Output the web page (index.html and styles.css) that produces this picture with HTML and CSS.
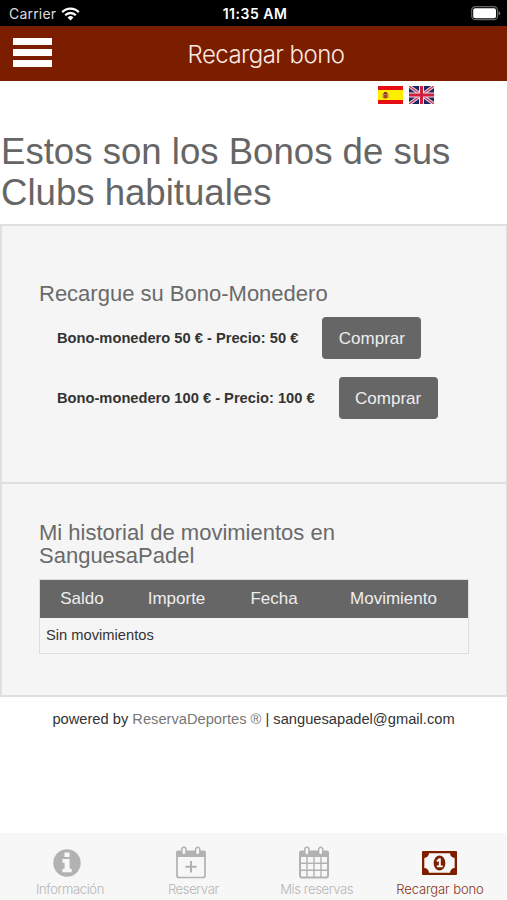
FILE: index.html
```html
<!DOCTYPE html>
<html lang="es">
<head>
<meta charset="utf-8">
<title>Recargar bono</title>
<link rel="stylesheet" href="styles.css">
</head>
<body>
<div class="status">
  <div class="carrier"><span>Carrier</span>
    <svg width="19" height="14" viewBox="0 0 19 14" fill="none" stroke="#fff" stroke-width="2.3"><path d="M1.2 5.1a11.7 11.7 0 0 1 16.6 0M4.2 8.2a7.5 7.5 0 0 1 10.6 0"/><path d="M6.6 10.4a4.1 4.1 0 0 1 5.8 0L9.5 13.5z" fill="#fff" stroke="none"/></svg>
  </div>
  <div class="time">11:35 AM</div>
  <svg class="battery" width="30" height="15" viewBox="0 0 30 15"><rect x=".7" y=".7" width="25.8" height="13" rx="3.6" fill="none" stroke="#666" stroke-width="1.2"/><rect x="2.2" y="2.2" width="22.8" height="10" rx="2" fill="#fff"/><path d="M27.6 5v4.6q1.7-.8 1.7-2.3T27.6 5z" fill="#777"/></svg>
</div>
<header class="bar">
  <div class="menu"><i></i><i></i><i></i></div>
  <div class="title">Recargar bono</div>
</header>
<main>
  <div class="flags">
    <svg width="25" height="18" viewBox="0 0 25 18"><path fill="#e60d13" d="M0 0h25v18H0z"/><path fill="#ffed00" d="M0 4h25v10H0z"/><path fill="#c66b3b" d="M5 7h5v5H5z"/><path fill="#8e3d2c" d="M6 6h3v2H6zM6.500 9h2v3.500h-2z"/><path fill="#b99b62" d="M4.500 8h1v4h-1zM9.500 8h1v4h-1z"/></svg>
    <svg width="25" height="18" viewBox="0 0 25 18"><path fill="#1c2663" d="M0 0h25v18H0z"/><path stroke="#e9d9e4" stroke-width="3.400" d="M0 0l25 18M25 0L0 18"/><path stroke="#cf3452" stroke-width="1.300" d="M0 0l25 18M25 0L0 18"/><path stroke="#f1dfe8" stroke-width="5" d="M12.500 0v18M0 9h25"/><path stroke="#d01f3d" stroke-width="3" d="M12.500 0v18M0 9h25"/></svg>
  </div>
  <h1>Estos son los Bonos de sus Clubs habituales</h1>
  <section class="panel buy">
    <h2>Recargue su Bono-Monedero</h2>
    <div class="offer"><b>Bono-monedero 50 € - Precio: 50 €</b><button>Comprar</button></div>
    <div class="offer"><b>Bono-monedero 100 € - Precio: 100 €</b><button>Comprar</button></div>
  </section>
  <section class="panel history">
    <h2>Mi historial de movimientos en SanguesaPadel</h2>
    <div class="table">
      <div class="thead"><span>Saldo</span><span>Importe</span><span>Fecha</span><span>Movimiento</span></div>
      <div class="empty">Sin movimientos</div>
    </div>
  </section>
  <footer>powered by <a>ReservaDeportes ®</a> | sanguesapadel@gmail.com</footer>
</main>
<nav>
  <div class="tab info">
    <svg width="28" height="28" viewBox="0 0 28 28"><circle cx="14" cy="14" r="13.700" fill="#b2b2b2"/><path fill="#f7f7f7" d="M11.500 3.600h5v4.300h-5zM9.400 10h7.200v9.700h2.100v3.600H9.400v-3.600h2.200v-6H9.400z"/></svg>
    <span>Información</span>
  </div>
  <div class="tab book">
    <svg width="30" height="33" viewBox="0 0 30 33" fill="none" stroke="#b2b2b2"><path fill="#b2b2b2" stroke="none" d="M2 4.500h26a2 2 0 0 1 2 2V11H0V6.500a2 2 0 0 1 2-2z"/><path stroke-width="1.700" d="M1 7v22.500Q1 31.500 3 31.500h24q2 0 2-2V7"/><path fill="#f7f7f7" stroke-width="1.500" d="M5.800 3.400a2.100 2.100 0 0 1 4.200 0v3.400a2.100 2.100 0 0 1-4.200 0zM19.600 3.400a2.100 2.100 0 0 1 4.200 0v3.400a2.100 2.100 0 0 1-4.200 0z"/><path stroke-width="2.100" d="M15 15v11.500M9.300 20.700h11.400"/></svg>
    <span>Reservar</span>
  </div>
  <div class="tab mine">
    <svg width="30" height="33" viewBox="0 0 30 33" fill="none" stroke="#b2b2b2"><path fill="#b2b2b2" stroke="none" d="M2 4.500h26a2 2 0 0 1 2 2V11H0V6.500a2 2 0 0 1 2-2z"/><path stroke-width="2" d="M1 7v22.500Q1 31.500 3 31.500h24q2 0 2-2V7"/><path fill="#f7f7f7" stroke-width="1.500" d="M5.800 3.400a2.100 2.100 0 0 1 4.200 0v3.400a2.100 2.100 0 0 1-4.200 0zM19.600 3.400a2.100 2.100 0 0 1 4.200 0v3.400a2.100 2.100 0 0 1-4.200 0z"/><path stroke-width="1.400" d="M8 11v20M15 11v20M22 11v20M1 17.300h28M1 24.300h28"/></svg>
    <span>Mis reservas</span>
  </div>
  <div class="tab active">
    <svg width="35" height="24" viewBox="0 0 35 24"><rect width="35" height="24" rx="1" fill="#7d1e00"/><path fill="#f7f7f7" d="M7 2.300h21a4.700 4.700 0 0 0 4.700 4.700v10a4.700 4.700 0 0 0-4.700 4.700H7A4.700 4.700 0 0 0 2.300 17V7A4.700 4.700 0 0 0 7 2.300z"/><ellipse cx="17.500" cy="12" rx="5.900" ry="7.600" fill="#7d1e00"/><path fill="#f7f7f7" d="M16.800 7.300h2v7.300h2v1.700h-6v-1.700h2V10l-1.500 1-1-1.300z"/></svg>
    <span>Recargar bono</span>
  </div>
</nav>
</body>
</html>
```
FILE: styles.css
```css
* { box-sizing: border-box; }
body {
  margin: 0;
  height: 900px;
  display: flex;
  flex-direction: column;
  background: #fff;
  color: #333;
  font-family: "Liberation Sans", Arial, sans-serif;
  overflow: hidden;
}
svg { display: block; flex: none; }
.status {
  height: 26px;
  flex: none;
  background: #000;
  color: #fff;
  display: grid;
  grid-template-columns: 1fr auto 1fr;
  align-items: center;
  padding: 1px 6px 0 9px;
  font: 14px/20px Inter, sans-serif;
}
.carrier { display: flex; align-items: center; gap: 5px; color: #ddd; letter-spacing: .2px; }
.time { font-weight: 600; letter-spacing: .5px; }
.battery { justify-self: end; }
.bar {
  height: 55px;
  flex: none;
  background: #7b1e00;
  display: grid;
  grid-template-columns: 52px 1fr 27px;
  align-items: center;
}
.menu { display: flex; flex-direction: column; gap: 4px; padding: 0 0 3px 13px; }
.menu i { height: 7px; background: #fff; }
.title {
  color: #fbe9e2;
  text-align: center;
  font: 300 24px/30px Inter, sans-serif;
  letter-spacing: -.55px;
  padding-top: 2px;
}
main { flex: 1; }
.flags { display: flex; gap: 6px; padding: 5px 0 0 378px; }
h1 {
  margin: 28px 0 11px;
  padding: 0 2px 0 1px;
  color: #666;
  font-weight: 400;
  font-size: 36.6px;
  line-height: 40.5px;
}
h2 {
  margin: 0;
  color: #6a6a6a;
  font-weight: 400;
  font-size: 22px;
  line-height: 23px;
}
.panel { background: #f5f5f5; border: 2px solid #dfdfdf; border-right-width: 1px; padding: 0 37px; }
.buy { height: 259px; padding-top: 56px; border-bottom-width: 1px; }
.offer {
  display: flex;
  align-items: center;
  gap: 24px;
  height: 42px;
  margin: 12px 0 0 18px;
  font-size: 14.68px;
}
.offer + .offer { margin-top: 18px; }
button {
  width: 99px;
  height: 42px;
  padding: 2px 0 0;
  border: 0;
  border-radius: 4px;
  background: #666;
  color: #eee;
  font: 17px "Liberation Sans", Arial, sans-serif;
}
.history { height: 214px; padding-top: 37px; border-top-width: 1px; }
.table { width: 430px; margin-top: 12px; border: 1px solid #ddd; }
.thead {
  height: 38px;
  display: grid;
  grid-template-columns: 84px 105px 90px 149px;
  align-items: center;
  text-align: center;
  background: #666;
  color: #eee;
  font-size: 17px;
}
.empty { height: 35px; padding-left: 6px; font-size: 14.7px; line-height: 35px; }
footer { text-align: center; font-size: 14.68px; line-height: 20px; margin-top: 12px; }
footer a { color: #777; }
nav {
  height: 67px;
  flex: none;
  background: #f7f7f7;
  display: flex;
  justify-content: space-between;
  padding: 0 17px 0 20px;
}
.tab {
  width: 100px;
  display: flex;
  flex-direction: column;
  align-items: center;
  justify-content: flex-end;
  color: #b5b5b5;
  font: 300 13px/16px Inter, sans-serif;
  letter-spacing: -.35px;
  white-space: nowrap;
  padding-bottom: 3px;
}
.tab svg { margin: 0 4px 2px 0; }
.info svg { margin: 0 7px 4px 0; }
.mine svg { margin-right: 5px; }
.active { color: #8a3215; letter-spacing: -.1px; }
.active svg { margin: 0 0 6px; }
```
